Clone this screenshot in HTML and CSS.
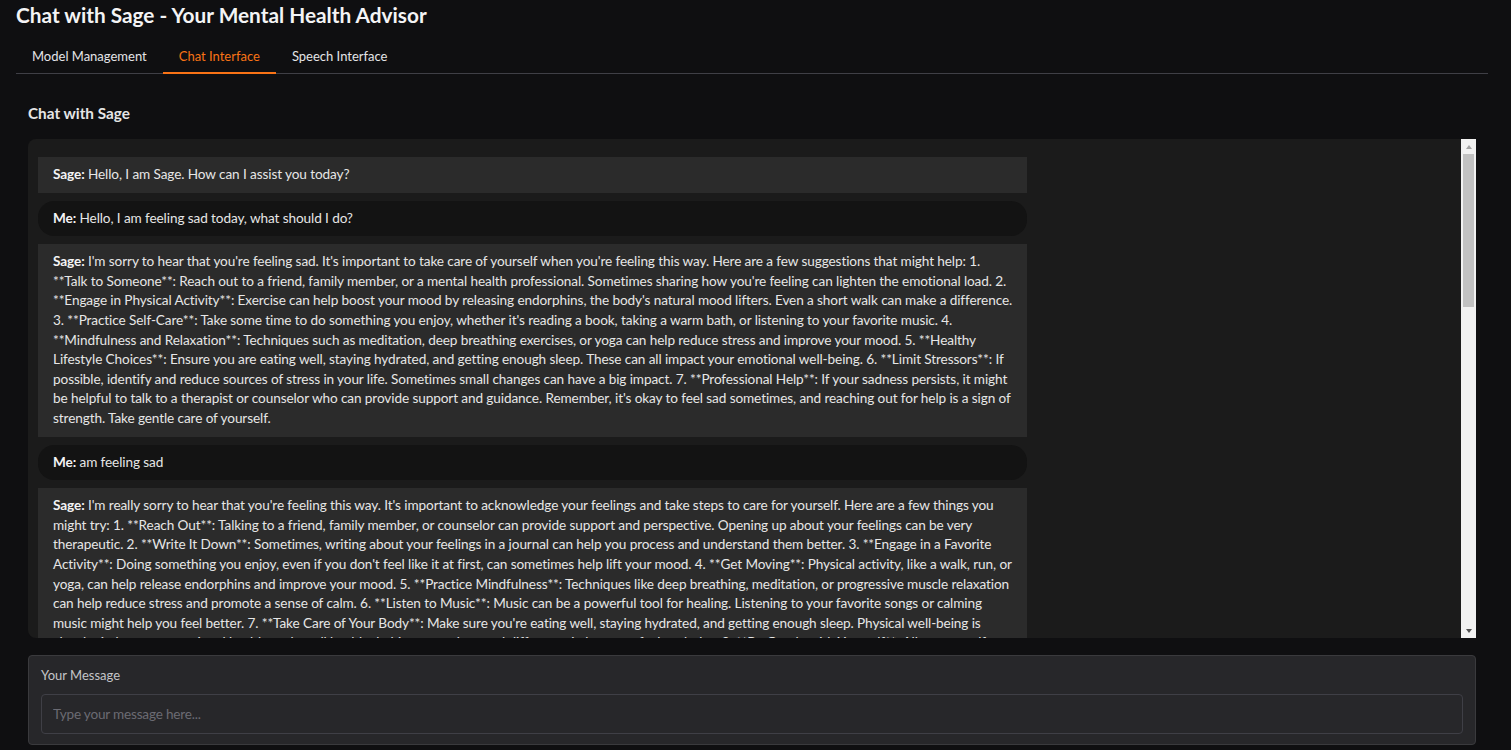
FILE: index.html
```html
<!DOCTYPE html>
<html lang="en">
<head>
    <meta charset="UTF-8">
    <meta name="viewport" content="width=device-width, initial-scale=1.0">
    <title>Chat with Sage</title>
    <link rel="stylesheet" href="styles.css">
</head>
<body>
    <div class="app">
        <h1 class="title">Chat with Sage - Your Mental Health Advisor</h1>

        <div class="tabs">
            <button class="tab">Model Management</button>
            <button class="tab active">Chat Interface</button>
            <button class="tab">Speech Interface</button>
        </div>

        <div class="panel">
            <h2 class="panel-title">Chat with Sage</h2>

            <div class="chatbot">
                <div class="chat-log">
                    <div class="message bot"><b>Sage:</b> Hello, I am Sage. How can I assist you today?</div>
                    <div class="message user"><b>Me:</b> Hello, I am feeling sad today, what should I do?</div>
                    <div class="message bot"><b>Sage:</b> I'm sorry to hear that you're feeling sad. It's important to take care of yourself when you're feeling this way. Here are a few suggestions that might help: 1. **Talk to Someone**: Reach out to a friend, family member, or a mental health professional. Sometimes sharing how you're feeling can lighten the emotional load. 2. **Engage in Physical Activity**: Exercise can help boost your mood by releasing endorphins, the body's natural mood lifters. Even a short walk can make a difference. 3. **Practice Self-Care**: Take some time to do something you enjoy, whether it's reading a book, taking a warm bath, or listening to your favorite music. 4. **Mindfulness and Relaxation**: Techniques such as meditation, deep breathing exercises, or yoga can help reduce stress and improve your mood. 5. **Healthy Lifestyle Choices**: Ensure you are eating well, staying hydrated, and getting enough sleep. These can all impact your emotional well-being. 6. **Limit Stressors**: If possible, identify and reduce sources of stress in your life. Sometimes small changes can have a big impact. 7. **Professional Help**: If your sadness persists, it might be helpful to talk to a therapist or counselor who can provide support and guidance. Remember, it's okay to feel sad sometimes, and reaching out for help is a sign of strength. Take gentle care of yourself.</div>
                    <div class="message user"><b>Me:</b> am feeling sad</div>
                    <div class="message bot"><b>Sage:</b> I'm really sorry to hear that you're feeling this way. It's important to acknowledge your feelings and take steps to care for yourself. Here are a few things you might try: 1. **Reach Out**: Talking to a friend, family member, or counselor can provide support and perspective. Opening up about your feelings can be very therapeutic. 2. **Write It Down**: Sometimes, writing about your feelings in a journal can help you process and understand them better. 3. **Engage in a Favorite Activity**: Doing something you enjoy, even if you don't feel like it at first, can sometimes help lift your mood. 4. **Get Moving**: Physical activity, like a walk, run, or yoga, can help release endorphins and improve your mood. 5. **Practice Mindfulness**: Techniques like deep breathing, meditation, or progressive muscle relaxation can help reduce stress and promote a sense of calm. 6. **Listen to Music**: Music can be a powerful tool for healing. Listening to your favorite songs or calming music might help you feel better. 7. **Take Care of Your Body**: Make sure you're eating well, staying hydrated, and getting enough sleep. Physical well-being is closely tied to your emotional health, and small healthy habits can make a real difference in how you feel each day. 8. **Be Gentle with Yourself**: Allow yourself to feel what you're feeling without judgment. It's okay to have difficult days. If your sadness lingers or becomes overwhelming, please consider reaching out to a mental health professional who can offer guidance and support. You don't have to go through this alone.</div>
                    <div class="message user"><b>Me:</b> thank you, that helps a little</div>
                </div>
                <div class="scrollbar">
                    <span class="scroll-btn"><span class="arrow up"></span></span>
                    <div class="scroll-track"><div class="scroll-thumb"></div></div>
                    <span class="scroll-btn"><span class="arrow down"></span></span>
                </div>
            </div>

            <div class="input-block">
                <label class="input-label" for="message">Your Message</label>
                <input type="text" class="input" id="message" placeholder="Type your message here...">
            </div>
        </div>
    </div>
</body>
</html>
```

FILE: styles.css
```css
body {
    margin: 0;
    background-color: #0f0f11;
    color: #e6e6e6;
    font-family: Lato, "Noto Sans", sans-serif;
    font-size: 14px;
}
.app {
    padding: 0 23px 0 16px;
}
.title {
    margin: 0;
    padding-top: 2px;
    font-size: 20.8px;
    font-weight: 700;
    line-height: 26px;
    color: #f4f4f5;
}
.tabs {
    display: flex;
    margin-top: 13px;
    border-bottom: 1px solid #3f3f46;
}
.tab {
    background: none;
    border: none;
    border-bottom: 2px solid transparent;
    margin-bottom: -1px;
    padding: 6px 16px 7px;
    font-family: inherit;
    font-size: 13px;
    line-height: 18px;
    color: #e4e4e7;
    cursor: pointer;
}
.tab.active {
    color: #f97316;
    border-bottom-color: #f97316;
}
.panel {
    padding: 0 12px;
}
.panel-title {
    margin: 0;
    padding: 29px 0 16px;
    font-size: 15.3px;
    font-weight: 700;
    line-height: 20px;
    color: #e6e6e6;
}
.chatbot {
    display: flex;
    height: 499px;
    background-color: #1b1b1b;
    border-radius: 8px 0 0 8px;
    overflow: hidden;
}
.chat-log {
    flex: 1;
    min-width: 0;
    overflow: hidden;
    padding: 18px 10px 10px;
    display: flex;
    flex-direction: column;
    gap: 8px;
}
.message {
    max-width: 70%;
    padding: 8px 13px 8px 15px;
    font-size: 13.6px;
    letter-spacing: -0.1px;
    line-height: 19.6px;
    box-sizing: border-box;
    color: #e6e6e6;
}
.message b {
    color: #f4f4f5;
}
.message.bot {
    background-color: #2b2b2b;
}
.message.user {
    background-color: #131313;
    border-radius: 16px;
}
.scrollbar {
    width: 15px;
    display: flex;
    flex-direction: column;
    background-color: #f1f1f1;
}
.scroll-btn {
    height: 15px;
    display: flex;
    align-items: center;
    justify-content: center;
}
.arrow {
    width: 0;
    height: 0;
    border-left: 3.5px solid transparent;
    border-right: 3.5px solid transparent;
}
.arrow.up {
    border-bottom: 4px solid #a3a3a3;
}
.arrow.down {
    border-top: 4px solid #505050;
}
.scroll-track {
    flex: 1;
    padding: 0 2px;
}
.scroll-thumb {
    height: 153px;
    background-color: #c1c1c1;
}
.input-block {
    margin-top: 17px;
    background-color: #27272a;
    border: 1px solid #3a3a3d;
    border-radius: 4px;
    padding: 11px 12px 10px;
}
.input-label {
    display: block;
    font-size: 13px;
    line-height: 16px;
    color: #c4c4c8;
    margin-bottom: 11px;
}
.input {
    display: block;
    width: 100%;
    height: 40px;
    box-sizing: border-box;
    background-color: #27272a;
    border: 1px solid #3f3f46;
    border-radius: 4px;
    padding: 0 11px;
    font-family: inherit;
    font-size: 13.6px;
    letter-spacing: -0.2px;
    color: #e6e6e6;
}
.input::placeholder {
    color: #6b6b73;
}
```
